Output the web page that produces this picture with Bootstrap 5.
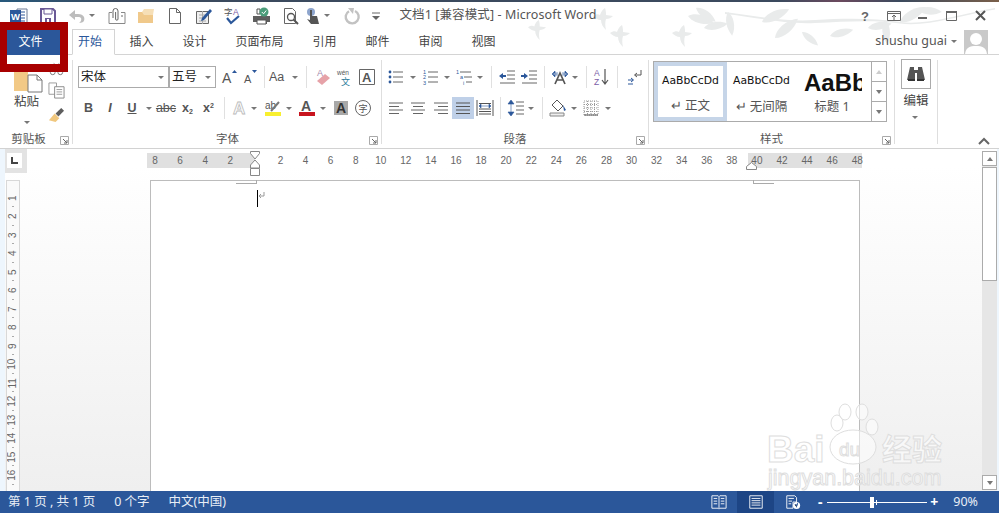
<!DOCTYPE html>
<html lang="zh"><head><meta charset="utf-8"><title>文档1 - Microsoft Word</title>
<link href="https://cdn.jsdelivr.net/npm/bootstrap@5.3.0/dist/css/bootstrap.min.css" rel="stylesheet">
<style>
html{background:#fff}
html,body{margin:0;height:513px;overflow:hidden}
body{background:transparent;font-family:"Noto Sans","Noto Sans CJK SC",sans-serif;font-size:12px;color:#444;line-height:1}
.app{width:999px;height:513px}
.ic{display:block;width:100%;height:100%}
.topline{height:2px;background:linear-gradient(90deg,#27597c,#3b4a5e 12%,#3b4a5e 78%,#6b4a5e 84%,#3b4a5e 90%,#7a5f4a)}
.titlebar{height:27px}
.qat{width:29px;height:24px;flex:none}.qat svg{width:18px;height:18px}
.qat.n{width:14px}.qat.s{width:22px}
.q-a{margin-left:-6px}.q-b{margin-left:3px}.q-c{margin-left:-3px}.q-d{margin-left:-4.5px}.q-e{margin-left:3.5px}.q-f{margin-left:-1.5px}
.doc-title{font-size:12.5px;color:#555;margin-left:13px;letter-spacing:.1px}
.win{width:29px;height:24px}.win svg{width:16px;height:16px}
.tabs{height:26px;border-bottom:1px solid #d4d4d4;color:#444}
.tab-file{margin-left:7px;width:53px;height:26px;background:#2b579a;color:#fff;padding-right:6px}
.tab-on{margin-left:12px;width:43px;height:26px;border:1px solid #d4d4d4;border-bottom-color:#fff;color:#2b579a;background:#fff;padding-right:7px}
.tab-t{padding:0 14.5px}
.user{font-size:12.5px;color:#555;margin-right:7px}
.avatar{width:24px;height:24px;background:#c9c9c9;margin-right:11px;overflow:hidden}
.ribbon{height:94px;border-bottom:1px solid #d2d2d2}
.grp{border-right:1px solid #dedede;margin:5px 0 4px;padding-top:6px}
.g-clip{width:73px}.g-font{width:308px;margin-left:1px;padding-left:4px}.g-para{width:267px;margin-left:0;padding-left:3px}
.g-style{width:246px;padding-left:4px;padding-top:1px}.g-edit{width:43px;padding-left:6px;padding-top:0}
.rw{height:22px}.rw+.rw{margin-top:9px}
.b{height:22px;flex:none}.b svg{width:18px;height:18px}
.x7{width:7px}.x8{width:8px}.x10{width:10px}.x12{width:12px}.x20{width:20px}.x21{width:21px}.x22{width:22px}
.m1{margin-left:1px}.m2{margin-left:2px}.m4{margin-left:4px}.m5{margin-left:5px}.m7{margin-left:7px}.m8{margin-left:8px}
.sp{width:1px;height:22px;background:#e0e0e0;flex:none}
.ar{width:0;height:0;border:3px solid transparent;border-top:3.5px solid #777;border-bottom:0}
.on{background:#bfd0e8}
.cb{height:22px;border:1px solid #ababab;background:#fff;color:#222;padding-left:2px;font-size:12.5px;flex:none}
.cb1{width:91px}.cb2{width:47px;margin-left:0}
.cb .ar{margin-left:auto;margin-right:4px}
.glb{height:18px;line-height:18px;position:absolute;left:0;right:0;bottom:-4px;text-align:center;color:#555;font-size:11.5px}
.glb-c{right:15px}
.launch{position:absolute;right:3px;bottom:-1px;width:9px;height:9px}
.ltr{font-family:"Liberation Sans",sans-serif;font-weight:700;font-size:12.5px;color:#555}
.ltr sub,.ltr sup{font-size:7px}
.paste{height:22px;margin-top:5px;margin-left:13px}
.paste-lab{margin-left:14px;margin-top:3px;font-size:12.5px}
.paste-ar{margin-top:12px}
.paste-col{width:54px;flex:none}
.tool-col{width:18px;margin-left:-6px;margin-top:-5px}.tool-col svg{width:17px;height:17px;display:block}
.tool-col svg+svg{margin-top:4px}.tool-col svg:last-child{margin-top:7px}
.gallery{width:234px;height:61px;border:1px solid #ababab;background:#fff;margin-top:0}
.st{flex:none;width:69px;height:100%;font-size:12.5px}
.st-sel{width:73px;border:4px solid #c6d5e8}
.st .s-t{font-family:"DejaVu Sans",sans-serif;color:#111;font-size:10.8px;height:30px;display:flex;align-items:center;justify-content:center;margin-top:4px}
.st .s-l{color:#555;margin-top:5px}
.st-sel .s-t{margin-top:0}
.st-sel .s-l{margin-top:4px}
.st-h{width:66px;overflow:hidden}
.st-h .s-t{font-family:"Liberation Sans",sans-serif;font-weight:700;font-size:24px;justify-content:flex-start;padding-left:8px;height:33px;white-space:nowrap;margin-top:4px;margin-bottom:0}
.st-h .s-l{margin-top:2px;padding-left:6px}
.g-scroll{width:15px;margin-left:auto;border-left:1px solid #ababab}
.g-scroll>div{flex:1 1 0;border-bottom:1px solid #ababab}.g-scroll>div:last-child{border-bottom:0}
.up{width:0;height:0;border:3.5px solid transparent;border-bottom:4px solid #777;border-top:0}
.up.f{border-bottom-color:#ccc}
.ed{width:30px;height:30px;border:1px solid #ababab;margin-top:-1px}.ed svg{width:20px;height:20px}
.edt{width:30px;margin-top:6px;font-size:12.5px;color:#444;text-align:center}
.collapse-btn{margin-left:auto;margin-right:9px;margin-bottom:3px;align-self:flex-end;width:12px;height:8px}
.docarea{flex:1 1 0;min-height:0;background:linear-gradient(#fff,#fff 5%,#efefef);border-left:5px solid #eef6fd;border-right:2px solid #eef6fd;overflow:hidden}
.rulerrow{height:31px}
.tabsel{width:22px;height:24px;background:#e3e3e3;padding:4px 5px 5px 2px}
.tabsel i{display:block;width:100%;height:100%;background:#fff;position:relative}
.hr{margin:4px 0 0 120px;width:715px;height:15px;background:linear-gradient(90deg,#e0e0e0 108px,#fff 108px,#fff 601px,#e0e0e0 601px);font:10px "Liberation Sans",sans-serif;color:#666}
.hr span{flex:none;width:25.08px;text-align:center;line-height:15px}
.hr .in{margin-left:-4.5px;display:flex}
.pagerow{flex:1 1 0;min-height:0}
.vrul{width:14px;margin-left:1px;background:#fafafa;border:1px solid #d8d8d8;border-bottom:0;font:10px "Liberation Sans",sans-serif;color:#666;overflow:hidden;padding-top:7.5px}
.vrul span{display:block;height:18.5px;position:relative;text-align:center}
.vrul span b{font-weight:400;display:inline-block;transform:rotate(-90deg);line-height:18.5px;white-space:nowrap}
.vrul span::after{content:"";position:absolute;left:5px;width:2px;height:1px;background:#aaa;bottom:0}
.page{margin-left:130px;width:710px;background:#fff;border:1px solid #bcbcbc;border-bottom:0;position:relative}
.vs{width:15px;background:#e6e6e6;margin-top:2px;margin-bottom:1px}
.vs .btnb{height:15px;background:#fff;border:1px solid #ababab}
.vs .th{height:114px;background:#fff;border:1px solid #ababab;margin-top:1px}
.dn{width:0;height:0;border:3.5px solid transparent;border-top:4px solid #777;border-bottom:0}
.status{height:22px;background:#2b579a;color:#e8eef6;font-size:12.5px}
.status .left span{margin-left:8px}
.status .left span+span{margin-left:19px}
.view{height:22px;width:37px}.view svg{width:16px;height:16px}
.view.cur{background:#1d4585}
.slider{width:100px;height:1px;background:#fff;position:relative;margin:0 3px}
.slider i{position:absolute;left:43px;top:-5px;width:4px;height:11px;background:#fff}
.slider u{position:absolute;left:49px;top:-2px;width:1px;height:5px;background:#fff}
.zm{color:#fff;font-weight:700;font-size:14px;width:8px;text-align:center}
.zm1{margin-left:5px}.zm2{margin-left:1px}
.pct{margin-left:15px;margin-right:21px}
.over{position:absolute}
.redbox{left:0;top:22px;width:68px;height:50px;border:solid #a80000;border-width:8px 8px 8px 7px}
.leaves{left:500px;top:2px;width:499px;height:52px;z-index:-1}
.hg{left:250px;top:151px;width:10px;height:25px}
.ri{left:746px;top:162px;width:11px;height:8px}
.cm1{left:236px;top:180px;width:21px;height:4px;border:solid #aaa;border-width:0 1px 1px 0}
.cm2{left:753px;top:180px;width:21px;height:4px;border:solid #aaa;border-width:0 0 1px 1px}
.caret{left:257px;top:190px;width:1px;height:17px;background:#000}
.pil{left:258px;top:192px;width:7px;height:8px}
.wm{left:755px;top:400px;width:200px;height:91px}
.tmk{left:3px;top:3px;width:9px;height:9px}
</style></head>
<body>
<svg width="0" height="0" class="d-none" aria-hidden="true"><defs>
<symbol id="launch" viewBox="0 0 9 9"><path d="M.5.5h8v8h-8z" fill="none" stroke="#aaa"/><path d="M3 3l4 4M7 4v3H4" fill="none" stroke="#666"/></symbol>
<symbol id="bul" viewBox="0 0 18 18"><g fill="#2b579a"><circle cx="3" cy="4" r="1.4"/><circle cx="3" cy="9" r="1.4"/><circle cx="3" cy="14" r="1.4"/></g><path d="M6 4h10M6 9h10M6 14h10" stroke="#666"/></symbol>
<symbol id="num" viewBox="0 0 18 18"><g font-family="Liberation Sans" font-size="5.5" fill="#2b579a"><text x="1" y="6">1</text><text x="1" y="11">2</text><text x="1" y="16.500">3</text></g><path d="M6 4h10M6 9h10M6 14h10" stroke="#666"/></symbol>
<symbol id="mul" viewBox="0 0 18 18"><g font-family="Liberation Sans" font-size="5.500" fill="#2b579a"><text x="0" y="6">1</text><text x="4" y="11">a</text><text x="7" y="16.500">i</text></g><path d="M4 4h11M8 9h8M10 14h6" stroke="#666"/></symbol>
<symbol id="outd" viewBox="0 0 18 18"><path d="M9 3h8M9 7h8M9 11h8M2 15h15" stroke="#666"/><path d="M1 8l4-3v2h3v2H5v2z" fill="#2b579a"/></symbol>
<symbol id="ind" viewBox="0 0 18 18"><path d="M9 3h8M9 7h8M9 11h8M2 15h15" stroke="#666"/><path d="M8 8L4 5v2H1v2h3v2z" fill="#2b579a"/></symbol>
<symbol id="chn" viewBox="0 0 18 18"><path d="M1 6l3-3v2h3M17 6l-3-3v2h-3M1 6l3 3V7h3M17 6l-3 3V7h-3" fill="#2b579a" stroke="#2b579a" stroke-width=".6"/><path d="M4 16L9 5l5 11M6 12h6" fill="none" stroke="#555" stroke-width="1.700"/></symbol>
<symbol id="az" viewBox="0 0 18 18"><text x="1" y="8" font-family="Liberation Sans" font-size="8.500" fill="#7b5ea7">A</text><text x="1" y="17" font-family="Liberation Sans" font-size="8.500" fill="#7b5ea7">Z</text><path d="M12 1v14M9 12l3 4 3-4" fill="none" stroke="#555" stroke-width="1.200"/></symbol>
<symbol id="pil" viewBox="0 0 18 18"><path d="M16 2v5h-6M12 5L9.500 7 12 9" fill="none" stroke="#555"/><path d="M3 12h5M6 10l2.500 2L6 14M3 16h5" fill="none" stroke="#2b579a"/></symbol>
<symbol id="al" viewBox="0 0 18 18"><path d="M2 4h14M2 7.500h10M2 11h14M2 14.500h10" stroke="#666"/></symbol>
<symbol id="ac" viewBox="0 0 18 18"><path d="M2 4h14M4 7.500h10M2 11h14M4 14.500h10" stroke="#666"/></symbol>
<symbol id="ar" viewBox="0 0 18 18"><path d="M2 4h14M6 7.500h10M2 11h14M6 14.500h10" stroke="#666"/></symbol>
<symbol id="aj" viewBox="0 0 18 18"><path d="M2 4h14M2 7.500h14M2 11h14M2 14.500h14" stroke="#555"/></symbol>
<symbol id="ad" viewBox="0 0 18 18"><path d="M1 1v16M17 1v16" stroke="#555"/><path d="M3 4.500h12M3 10h12M3 12.500h12M3 15h12" stroke="#555"/><path d="M3 7l2-2v4zM15 7l-2-2v4zM5 7h8" fill="#2b579a" stroke="#2b579a" stroke-width=".6"/></symbol>
<symbol id="ls" viewBox="0 0 18 18"><path d="M4 1l3 4H1zM4 17l3-4H1zM4 4v10" fill="#2b579a" stroke="#2b579a" stroke-width=".6"/><path d="M9 3h8M9 7h8M9 11h8M9 15h8" stroke="#666"/></symbol>
<symbol id="sh" viewBox="0 0 18 18"><path d="M8 1l6 6-5 5-6-6z" fill="#fff" stroke="#555"/><path d="M14 6l3 5-2 1z" fill="#2b579a"/><path d="M1 14h14v3H1z" fill="#eee" stroke="#888"/></symbol>
<symbol id="bd" viewBox="0 0 18 18"><path d="M2 2h14v14H2zM9 2v14M2 9h14M5.500 2v14M12.500 2v14M2 5.500h14M2 12.500h14" fill="none" stroke="#999" stroke-dasharray="1 1"/><path d="M2 16h14" stroke="#555"/></symbol>
<symbol id="cl" viewBox="0 0 18 18"><circle cx="5" cy="12" r="2.500" fill="none" stroke="#777"/><circle cx="13" cy="12" r="2.500" fill="none" stroke="#777"/><path d="M6 10l6-8M12 10L6 2" stroke="#aaa"/></symbol>
<symbol id="cp" viewBox="0 0 18 18"><path d="M1 1h8l0 12H1z" fill="#fff" stroke="#999"/><path d="M7 5h10v12H7z" fill="#fff" stroke="#888"/><path d="M9 8h6M9 10.500h6M9 13h6" stroke="#999"/></symbol>
<symbol id="br" viewBox="0 0 18 18"><path d="M1 15l6-7 5 5-4 4z" fill="#f0c77e"/><path d="M8 8l6-6 3 3-6 6z" fill="#5e5e5e"/></symbol>
<symbol id="er" viewBox="0 0 18 18"><text x="3" y="8" font-family="Liberation Sans" font-size="9" fill="#a68aad">A</text><path d="M3 13l8-7 5 4-8 7z" fill="#e6a2a8"/></symbol>
<symbol id="bin" viewBox="0 0 20 20"><path d="M4 3h4v3h4V3h4l3 13H11V9H9v7H1z" fill="#555"/><path d="M2 15h7v2H2zM11 15h7v2h-7z" fill="#333"/></symbol>
<symbol id="w" viewBox="0 0 18 18"><path d="M7 2h10v14H7z" fill="#fff" stroke="#6c7b95"/><path d="M11 5h4M11 8h4M11 11h4M11 14h4" stroke="#2b579a"/><path d="M0 3h11v12H0z" fill="#2b579a"/><text x="1" y="12.500" font-family="Liberation Sans" font-size="9.500" font-weight="700" fill="#fff">W</text></symbol>
<symbol id="save" viewBox="0 0 18 18"><path d="M2 2h12l2 2v12H2z" fill="#fff" stroke="#6b5a96" stroke-width="2"/><path d="M5 2h8v5H5z" fill="#fff" stroke="#6b5a96"/><path d="M6 11h6v5H6z" fill="#6b5a96"/><path d="M8 12h2v4H8z" fill="#fff"/></symbol>
<symbol id="undo" viewBox="0 0 18 18"><path d="M7 3L1 8l6 5V10h4c3 0 3 4 0 6 5 0 6-3 5-6-1-2-3-3-6-3H7z" fill="#bdbdbd"/></symbol>
<symbol id="clip" viewBox="0 0 18 18"><path d="M5 11V4a2.500 2.500 0 015 0v8a1.200 1.200 0 01-2.400 0V5" fill="none" stroke="#666"/><path d="M1 5.500v11h16v-11h-4M1 5.500h3" fill="none" stroke="#888"/><path d="M13 9h2" stroke="#666"/></symbol>
<symbol id="fold" viewBox="0 0 18 18"><path d="M1 5h5l1 2h9v9H1z" fill="#f0c98b"/><path d="M5 5l2-3h10l-1 6H7z" fill="#f6dfb7"/></symbol>
<symbol id="pg" viewBox="0 0 18 18"><path d="M3.500 1.500h7l4 4v11h-11z" fill="#fff" stroke="#666"/><path d="M10.500 1.500v4h4" fill="none" stroke="#666"/></symbol>
<symbol id="ed" viewBox="0 0 18 18"><path d="M1.500 4.500h12v12h-12z" fill="#eee" stroke="#666"/><path d="M4 8h7M4 11h7M4 14h7M7.500 4v13" stroke="#aaa"/><path d="M7 11l8-9 2 2-8 9-3 1z" fill="#2b579a"/></symbol>
<symbol id="spell" viewBox="0 0 18 18"><text x="0" y="8" font-size="8.500" font-family="Noto Sans CJK SC" fill="#555">字</text><text x="9" y="8" font-size="8.500" font-family="Liberation Sans" fill="#7b5ea7">A</text><path d="M3 11l4 5 8-7" fill="none" stroke="#2b579a" stroke-width="2.200"/></symbol>
<symbol id="prt" viewBox="0 0 18 18"><path d="M0 9h17v6h-3v2H4v-2H0z" fill="#5f5f5f"/><path d="M4 13h9v4H4z" fill="#fff" stroke="#555"/><path d="M4 2h3v5H4z" fill="#fff" stroke="#555"/><circle cx="11" cy="5" r="4.500" fill="#4b9d7a"/><path d="M8.800 5l1.800 1.800 2.600-3.300" fill="none" stroke="#fff"/></symbol>
<symbol id="prv" viewBox="0 0 18 18"><path d="M2.500 1.500h8l3 3v12h-11z" fill="#fff" stroke="#666"/><circle cx="9" cy="10" r="3.500" fill="#fff" stroke="#555" stroke-width="1.300"/><path d="M11.500 12.500l4.500 4.500" stroke="#555" stroke-width="2"/></symbol>
<symbol id="tch" viewBox="0 0 18 18"><circle cx="7" cy="5" r="4" fill="#8ea5cd"/><path d="M6 3h2v6h5l2 8H7L3 12l3 1z" fill="#555"/></symbol>
<symbol id="red" viewBox="0 0 18 18"><path d="M12 4a6.500 6.500 0 11-6 .2" fill="none" stroke="#c2c2c2" stroke-width="2.400"/><path d="M5 1h6l-1 6z" fill="#c2c2c2"/></symbol>
<symbol id="cus" viewBox="0 0 18 18"><path d="M5 6h8" stroke="#666"/><path d="M5 9h8l-4 4z" fill="#666"/></symbol>
<symbol id="rd" viewBox="0 0 18 18"><path d="M1 2h7l1 1 1-1h7v14h-7l-1 1-1-1H1z" fill="none" stroke="#fff"/><path d="M9 3v13M3 5h4M3 8h4M3 11h4M11 5h4M11 8h4M11 11h4" stroke="#fff"/></symbol>
<symbol id="pl" viewBox="0 0 18 18"><path d="M2 2h14v14H2z" fill="none" stroke="#fff"/><path d="M4 5h10M4 7.500h10M4 10h10M4 12.500h10" stroke="#fff"/></symbol>
<symbol id="wb" viewBox="0 0 18 18"><path d="M2 2h9l2 2v5H9v7H2z" fill="none" stroke="#fff"/><path d="M4 5h6M4 8h4M4 11h3" stroke="#fff"/><circle cx="13" cy="13" r="4" fill="#fff"/><path d="M11 12h2v3M14 10v3" stroke="#2b579a"/></symbol>
<symbol id="bird" viewBox="0 0 20 22" overflow="visible"><path d="M0 8c3-2 5-2 7-1 1-3 2-5 5-7 1 3 1 5 1 7l7 1c-2 2-4 3-7 3-1 3-1 7 0 11-3-3-5-6-5-10-3 0-6-2-8-4z"/></symbol>
<path id="lf" d="M0 0C6-6 20-7 30 0 20 6 7 6 0 0z"/>
</defs></svg>

<div class="app d-flex flex-column position-relative">
  <div class="topline"></div>
  <div class="titlebar d-flex align-items-center">
    <div class="qat d-flex justify-content-center align-items-center ms-1"><svg><use href="#w"/></svg></div>
    <div class="qat d-flex justify-content-center align-items-center"><svg><use href="#save"/></svg></div>
    <div class="qat d-flex justify-content-center align-items-center"><svg><use href="#undo"/></svg></div>
    <div class="qat n q-a d-flex justify-content-center align-items-center"><span class="ar"></span></div>
    <div class="qat q-b d-flex justify-content-center align-items-center"><svg><use href="#clip"/></svg></div>
    <div class="qat d-flex justify-content-center align-items-center"><svg><use href="#fold"/></svg></div>
    <div class="qat d-flex justify-content-center align-items-center"><svg><use href="#pg"/></svg></div>
    <div class="qat d-flex justify-content-center align-items-center"><svg><use href="#ed"/></svg></div>
    <div class="qat d-flex justify-content-center align-items-center"><svg><use href="#spell"/></svg></div>
    <div class="qat d-flex justify-content-center align-items-center"><svg><use href="#prt"/></svg></div>
    <div class="qat d-flex justify-content-center align-items-center"><svg><use href="#prv"/></svg></div>
    <div class="qat s q-c d-flex justify-content-center align-items-center"><svg><use href="#tch"/></svg></div>
    <div class="qat n q-d d-flex justify-content-center align-items-center"><span class="ar"></span></div>
    <div class="qat q-e d-flex justify-content-center align-items-center"><svg><use href="#red"/></svg></div>
    <div class="qat s q-f d-flex justify-content-center align-items-center"><svg><use href="#cus"/></svg></div>
    <div class="doc-title">文档1 [兼容模式] - Microsoft Word</div>
    <div class="ms-auto d-flex me-1">
      <div class="win d-flex justify-content-center align-items-center"><svg viewBox="0 0 16 16"><text x="4" y="13" font-family="Liberation Sans" font-weight="700" font-size="13" fill="#666">?</text></svg></div>
      <div class="win d-flex justify-content-center align-items-center"><svg viewBox="0 0 16 16"><path d="M1.500 3.500h13v9h-13z" fill="none" stroke="#666"/><path d="M1 5.500h14M8 12V7M6 9l2-2 2 2" fill="none" stroke="#666"/></svg></div>
      <div class="win d-flex justify-content-center align-items-center"><svg viewBox="0 0 16 16"><path d="M3 10h9" stroke="#666" stroke-width="2"/></svg></div>
      <div class="win d-flex justify-content-center align-items-center"><svg viewBox="0 0 16 16"><path d="M2.500 3.500h10v9h-10z" fill="none" stroke="#666"/><path d="M2 4h11" stroke="#666" stroke-width="2"/></svg></div>
      <div class="win d-flex justify-content-center align-items-center"><svg viewBox="0 0 16 16"><path d="M3 3l9 9M12 3l-9 9" stroke="#555" stroke-width="2"/></svg></div>
    </div>
  </div>
  <div class="tabs d-flex align-items-center">
    <div class="tab-file d-flex justify-content-center align-items-center">文件</div>
    <div class="tab-on d-flex justify-content-center align-items-center">开始</div>
    <div class="d-flex ms-0">
      <div class="tab-t">插入</div><div class="tab-t">设计</div><div class="tab-t">页面布局</div><div class="tab-t">引用</div><div class="tab-t">邮件</div><div class="tab-t">审阅</div><div class="tab-t">视图</div>
    </div>
    <div class="user ms-auto d-flex align-items-center">shushu guai <span class="ar ms-1"></span></div>
    <div class="avatar"><svg class="ic" viewBox="0 0 24 24"><circle cx="12" cy="9" r="6" fill="#fff"/><path d="M1 24c1-7 5-8 11-8s10 1 11 8z" fill="#fff"/></svg></div>
  </div>

  <div class="ribbon d-flex">
    <div class="grp g-clip position-relative d-flex">
      <div class="paste-col">
        <svg class="paste d-block" width="30" height="22" viewBox="0 0 30 22"><path d="M1 0h14v20H1z" fill="#f2c986"/><path d="M15 4h9l5 5v12H15z" fill="#fff" stroke="#777"/><path d="M24 4v5h5" fill="none" stroke="#777"/></svg>
        <div class="paste-lab">粘贴</div>
        <div class="d-flex justify-content-center paste-ar"><span class="ar"></span></div>
      </div>
      <div class="tool-col">
        <svg><use href="#cl"/></svg>
        <svg><use href="#cp"/></svg>
        <svg><use href="#br"/></svg>
      </div>
      <div class="glb glb-c">剪贴板</div><svg class="launch"><use href="#launch"/></svg>
    </div>

    <div class="grp g-font position-relative">
      <div class="rw d-flex align-items-center">
        <div class="cb cb1 d-flex align-items-center">宋体<span class="ar"></span></div>
        <div class="cb cb2 d-flex align-items-center">五号<span class="ar"></span></div>
        <div class="b x21 m2 d-flex justify-content-center align-items-center"><svg viewBox="0 0 18 18"><text x="2" y="15" font-family="Liberation Sans" font-size="14" fill="#555">A</text><path d="M12 5h5l-2.500-3z" fill="#2b579a"/></svg></div>
        <div class="b x21 d-flex justify-content-center align-items-center"><svg viewBox="0 0 18 18"><text x="3" y="15" font-family="Liberation Sans" font-size="11" fill="#555">A</text><path d="M11 2h5l-2.500 3z" fill="#2b579a"/></svg></div>
        <div class="sp m4"></div>
        <div class="b m4 d-flex align-items-center gap-1"><span class="ltr fw-normal">Aa</span><span class="ar ms-1"></span></div>
        <div class="sp m8"></div>
        <div class="b x22 m5 d-flex justify-content-center align-items-center"><svg><use href="#er"/></svg></div>
        <div class="b x22 d-flex justify-content-center align-items-center"><svg viewBox="0 0 18 18"><text x="1" y="7" font-family="Liberation Sans" font-size="6.500" fill="#555">wén</text><text x="5" y="17" font-size="9" font-family="Noto Sans CJK SC" fill="#2b7a9a">文</text></svg></div>
        <div class="b x21 d-flex justify-content-center align-items-center"><svg viewBox="0 0 18 18"><path d="M1.500 1.500h15v15h-15z" fill="none" stroke="#666"/><text x="4" y="14" font-family="Liberation Sans" font-weight="700" font-size="13" fill="#555">A</text></svg></div>
      </div>
      <div class="rw d-flex align-items-center">
        <div class="b x21 d-flex justify-content-center align-items-center"><span class="ltr">B</span></div>
        <div class="b x22 d-flex justify-content-center align-items-center"><span class="ltr fst-italic">I</span></div>
        <div class="b x22 d-flex justify-content-center align-items-center"><span class="ltr text-decoration-underline">U</span></div>
        <div class="b x12 d-flex justify-content-center align-items-center"><span class="ar"></span></div>
        <div class="b x22 d-flex justify-content-center align-items-center"><span class="ltr fw-normal text-decoration-line-through">abc</span></div>
        <div class="b x21 d-flex justify-content-center align-items-center"><span class="ltr">x<sub>2</sub></span></div>
        <div class="b x21 d-flex justify-content-center align-items-center"><span class="ltr">x<sup>2</sup></span></div>
        <div class="sp m5"></div>
        <div class="b x20 m5 d-flex justify-content-center align-items-center"><svg viewBox="0 0 18 18"><text x="2" y="15" font-family="Liberation Sans" font-weight="700" font-size="17" fill="#fff" stroke="#bbb" stroke-width=".8">A</text></svg></div>
        <div class="b x8 d-flex justify-content-center align-items-center"><span class="ar"></span></div>
        <div class="b x20 m5 d-flex justify-content-center align-items-center"><svg viewBox="0 0 18 18"><text x="1" y="10" font-family="Liberation Sans" font-size="10" fill="#555">ab</text><path d="M7 12L15 3" stroke="#777" stroke-width="2"/><path d="M1 13h16v4H1z" fill="#f8ef2f"/></svg></div>
        <div class="b x12 d-flex justify-content-center align-items-center"><span class="ar"></span></div>
        <div class="b x20 m2 d-flex justify-content-center align-items-center"><svg viewBox="0 0 18 18"><text x="3" y="12" font-family="Liberation Sans" font-weight="700" font-size="14" fill="#555">A</text><path d="M1 13h16v4H1z" fill="#c8141e"/></svg></div>
        <div class="b x12 d-flex justify-content-center align-items-center"><span class="ar"></span></div>
        <div class="b x20 m2 d-flex justify-content-center align-items-center"><svg viewBox="0 0 18 18"><path d="M2 2h14v14H2z" fill="#a8a8a8"/><text x="4" y="14" font-family="Liberation Sans" font-weight="700" font-size="14" fill="#333">A</text></svg></div>
        <div class="b x20 m2 d-flex justify-content-center align-items-center"><svg viewBox="0 0 18 18"><circle cx="9" cy="9" r="7.500" fill="none" stroke="#666"/><text x="4.500" y="13" font-size="9" font-family="Noto Sans CJK SC" fill="#555">字</text></svg></div>
      </div>
      <div class="glb">字体</div><svg class="launch"><use href="#launch"/></svg>
    </div>

    <div class="grp g-para position-relative">
      <div class="rw d-flex align-items-center">
        <div class="b x22 d-flex justify-content-center align-items-center"><svg><use href="#bul"/></svg></div>
        <div class="b x12 d-flex justify-content-center align-items-center"><span class="ar"></span></div>
        <div class="b x22 m1 d-flex justify-content-center align-items-center"><svg><use href="#num"/></svg></div>
        <div class="b x10 d-flex justify-content-center align-items-center"><span class="ar"></span></div>
        <div class="b x22 m2 d-flex justify-content-center align-items-center"><svg><use href="#mul"/></svg></div>
        <div class="b x8 d-flex justify-content-center align-items-center"><span class="ar"></span></div>
        <div class="sp m7"></div>
        <div class="b x22 m4 d-flex justify-content-center align-items-center"><svg><use href="#outd"/></svg></div>
        <div class="b x22 d-flex justify-content-center align-items-center"><svg><use href="#ind"/></svg></div>
        <div class="sp m4"></div>
        <div class="b x22 m4 d-flex justify-content-center align-items-center"><svg><use href="#chn"/></svg></div>
        <div class="b x7 d-flex justify-content-center align-items-center"><span class="ar"></span></div>
        <div class="sp m8"></div>
        <div class="b x22 m4 d-flex justify-content-center align-items-center"><svg><use href="#az"/></svg></div>
        <div class="sp m4"></div>
        <div class="b x22 m5 d-flex justify-content-center align-items-center"><svg><use href="#pil"/></svg></div>
      </div>
      <div class="rw d-flex align-items-center">
        <div class="b x22 d-flex justify-content-center align-items-center"><svg><use href="#al"/></svg></div>
        <div class="b x22 d-flex justify-content-center align-items-center"><svg><use href="#ac"/></svg></div>
        <div class="b x22 m1 d-flex justify-content-center align-items-center"><svg><use href="#ar"/></svg></div>
        <div class="b x22 on d-flex justify-content-center align-items-center"><svg><use href="#aj"/></svg></div>
        <div class="b x22 d-flex justify-content-center align-items-center"><svg><use href="#ad"/></svg></div>
        <div class="sp m4"></div>
        <div class="b x22 m4 d-flex justify-content-center align-items-center"><svg><use href="#ls"/></svg></div>
        <div class="b x8 d-flex justify-content-center align-items-center"><span class="ar"></span></div>
        <div class="sp m7"></div>
        <div class="b x22 m4 d-flex justify-content-center align-items-center"><svg><use href="#sh"/></svg></div>
        <div class="b x10 d-flex justify-content-center align-items-center"><span class="ar"></span></div>
        <div class="b x22 m1 d-flex justify-content-center align-items-center"><svg><use href="#bd"/></svg></div>
        <div class="b x12 d-flex justify-content-center align-items-center"><span class="ar"></span></div>
      </div>
      <div class="glb">段落</div><svg class="launch"><use href="#launch"/></svg>
    </div>

    <div class="grp g-style position-relative">
      <div class="gallery d-flex">
        <div class="st st-sel text-center"><div class="s-t">AaBbCcDd</div><div class="s-l">↵ 正文</div></div>
        <div class="st text-center"><div class="s-t">AaBbCcDd</div><div class="s-l">↵ 无间隔</div></div>
        <div class="st st-h text-center"><div class="s-t">AaBb</div><div class="s-l">标题 1</div></div>
        <div class="g-scroll d-flex flex-column">
          <div class="d-flex justify-content-center align-items-center"><span class="up f"></span></div>
          <div class="d-flex justify-content-center align-items-center"><span class="dn"></span></div>
          <div class="d-flex justify-content-center align-items-center"><span class="dn"></span></div>
        </div>
      </div>
      <div class="glb">样式</div><svg class="launch"><use href="#launch"/></svg>
    </div>

    <div class="grp g-edit position-relative">
      <div class="ed d-flex justify-content-center align-items-center"><svg><use href="#bin"/></svg></div>
      <div class="edt">编辑</div>
      <div class="d-flex justify-content-center mt-2 x20 ms-1"><span class="ar"></span></div>
    </div>
    <svg class="collapse-btn" viewBox="0 0 12 8"><path d="M1 7l5-5 5 5" fill="none" stroke="#666" stroke-width="2"/></svg>
  </div>

  <div class="docarea d-flex">
    <div class="flex-grow-1 d-flex flex-column">
      <div class="rulerrow d-flex">
        <div class="tabsel"><i><svg class="over tmk" viewBox="0 0 9 9"><path d="M2 1v6h6" fill="none" stroke="#444" stroke-width="2"/></svg></i></div>
        <div class="hr"><div class="in">
          <span>8</span><span>6</span><span>4</span><span>2</span><span></span><span>2</span><span>4</span><span>6</span><span>8</span><span>10</span><span>12</span><span>14</span><span>16</span><span>18</span><span>20</span><span>22</span><span>24</span><span>26</span><span>28</span><span>30</span><span>32</span><span>34</span><span>36</span><span>38</span><span>40</span><span>42</span><span>44</span><span>46</span><span>48</span>
        </div></div>
      </div>
      <div class="pagerow d-flex">
        <div class="vrul">
          <span><b>1</b></span><span><b>2</b></span><span><b>3</b></span><span><b>4</b></span><span><b>5</b></span><span><b>6</b></span><span><b>7</b></span><span><b>8</b></span><span><b>9</b></span><span><b>10</b></span><span><b>11</b></span><span><b>12</b></span><span><b>13</b></span><span><b>14</b></span><span><b>15</b></span><span><b>16</b></span>
        </div>
        <div class="page"></div>
      </div>
    </div>
    <div class="vs d-flex flex-column">
      <div class="btnb d-flex justify-content-center align-items-center"><span class="up"></span></div>
      <div class="th"></div>
      <div class="btnb d-flex justify-content-center align-items-center mt-auto"><span class="dn"></span></div>
    </div>
  </div>

  <div class="status d-flex align-items-center">
    <div class="left d-flex"><span>第 1 页 , 共 1 页</span><span>0 个字</span><span>中文(中国)</span></div>
    <div class="ms-auto d-flex align-items-center">
      <div class="view d-flex justify-content-center align-items-center"><svg><use href="#rd"/></svg></div>
      <div class="view cur d-flex justify-content-center align-items-center"><svg><use href="#pl"/></svg></div>
      <div class="view d-flex justify-content-center align-items-center"><svg><use href="#wb"/></svg></div>
      <div class="zm zm1">-</div>
      <div class="slider"><i></i><u></u></div>
      <div class="zm">+</div>
      <div class="pct">90%</div>
    </div>
  </div>

  <div class="over redbox"></div>
  <svg class="over leaves" viewBox="0 0 499 52"><g fill="#e9ebeb">
    <use href="#bird" x="28" y="18" width="18" height="20"/>
    <use href="#bird" x="93" y="5" width="20" height="24"/>
    <use href="#bird" x="110" y="23" width="20" height="22"/>
    <use href="#bird" x="172" y="23" width="20" height="22"/>
    <use href="#lf" transform="translate(188 14) rotate(15) scale(.9)"/>
    <use href="#lf" transform="translate(196 6) rotate(35) scale(.8)"/>
    <use href="#lf" transform="translate(204 26) rotate(-10) scale(.8)"/>
    <use href="#lf" transform="translate(228 10) rotate(80) scale(.8)"/>
    <use href="#lf" transform="translate(262 20) rotate(-25) scale(1)"/>
    <use href="#lf" transform="translate(275 36) rotate(-40) scale(1)"/>
    <use href="#lf" transform="translate(302 30) rotate(40) scale(.7)"/>
    <use href="#lf" transform="translate(330 34) rotate(-15) scale(.8)"/>
    <use href="#lf" transform="translate(368 26) rotate(-10) scale(.8)"/>
    <use href="#lf" transform="translate(385 18) rotate(85) scale(.8)"/>
    <use href="#lf" transform="translate(400 20) rotate(-30) scale(1)"/>
    <use href="#lf" transform="translate(418 8) rotate(5) scale(.8)"/>
    <path d="M225 10c30 4 60 10 90 8s60-2 85 2 60-8 95-14v1.500c-35 6-70 18-95 14s-55-2-85-.500-60-6-90-9z"/>
  </g></svg>
  <div class="over hg"><svg class="ic" viewBox="0 0 10 25"><path d="M.5.500h9v2L5 8 .5 2.500z" fill="#fff" stroke="#888"/><path d="M5 9l4.500 5v3h-9v-3z" fill="#fff" stroke="#888"/><path d="M.5 17.500h9v7h-9z" fill="#fff" stroke="#888"/></svg></div>
  <div class="over ri"><svg class="ic" viewBox="0 0 11 8"><path d="M5.500.5l5 4v3h-10v-3z" fill="#fff" stroke="#888"/></svg></div>
  <div class="over cm1"></div><div class="over cm2"></div>
  <div class="over caret"></div>
  <svg class="over pil" viewBox="0 0 7 8"><path d="M6 0v4H1M3 2L1 4l2 2" fill="none" stroke="#999"/></svg>
  <svg class="over wm" viewBox="0 0 200 91"><g fill="#fff" fill-opacity=".5" stroke="#dedede">
    <text x="12" y="62" font-family="Liberation Sans" font-size="37" font-weight="700">Bai</text>
    <ellipse cx="98" cy="47" rx="23" ry="17"/><ellipse cx="82" cy="23" rx="6" ry="8"/><ellipse cx="90" cy="12" rx="6" ry="8"/><ellipse cx="107" cy="12" rx="6" ry="8"/><ellipse cx="117" cy="27" rx="6" ry="8"/>
    <text x="84" y="56" font-family="Liberation Sans" font-size="19">du</text>
    <text x="127" y="60" font-family="Noto Sans CJK SC" font-size="30" font-weight="700">经验</text>
    <text x="13" y="85" font-family="Liberation Sans" font-size="21.500">jingyan.baidu.com</text>
  </g></svg>
</div>
</body></html>
